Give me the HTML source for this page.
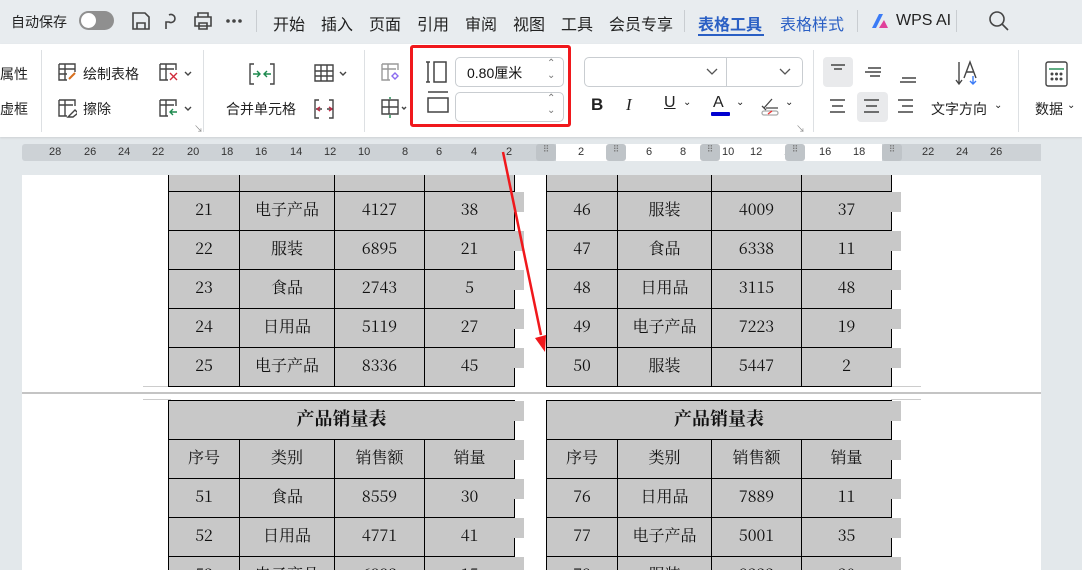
<!DOCTYPE html>
<html style="overflow:hidden;width:1082px;height:570px"><head><meta charset="utf-8"><style>
*{margin:0;padding:0;box-sizing:border-box}
body{width:1082px;height:570px;overflow:hidden;background:#e3e8eb;font-family:"Liberation Sans","Noto Sans CJK SC",sans-serif;position:relative;color:#222}
.a{position:absolute}
.top{left:0;top:0;width:1082px;height:44px;background:#e8ecef}
.tb{top:11px;font-size:16px;color:#222}
.rib{left:0;top:44px;width:1082px;height:93px;background:#fff;box-shadow:0 1px 2px rgba(0,0,0,.1)}
.t14{font-size:14px;color:#222}
.sep{width:1px;background:#dde0e3}
.ruler{left:22px;top:144px;width:1019px;height:17px;background:#cdd2d6;border-radius:3px;font-size:11px;color:#333}
.page{left:22px;top:175px;width:1019px;height:395px;background:#fff}
table{position:absolute;border-collapse:collapse;font-family:"Noto Serif CJK SC",serif;font-size:16px;color:#111}
td{border:1px solid #000;background:#c8c8c8;text-align:center;height:39px;padding:0 0 4px 0;line-height:20px;vertical-align:middle}
.mk{position:absolute;width:10px;height:20px;background:#c8c8c8}
.box{border:1px solid #c9cdd1;border-radius:5px;background:#fff}
</style></head><body>
<div class="a top"></div>
<div class="a tb" style="left:11px;top:12px;font-size:14px">自动保存</div>
<div class="a" style="left:79px;top:11px;width:35px;height:19px;border-radius:10px;background:#8f8f8f"><div style="position:absolute;left:2px;top:2px;width:15px;height:15px;border-radius:50%;background:#fff"></div></div>
<svg class="a" style="left:130px;top:10px" width="120" height="22" fill="none" stroke="#444" stroke-width="1.6">
<path d="M3 3h12l4 4v12H3z M7 19v-6h8v6"/>
<path d="M39 5a4 4 0 1 1 0 7h-3v7 M36 12a3 3 0 1 0 0 0"/>
<path d="M68 7V3h10v4 M65 7h16v9H65z M69 13h8v6h-8z"/>
<circle cx="98" cy="11" r="1" fill="#444"/><circle cx="104" cy="11" r="1" fill="#444"/><circle cx="110" cy="11" r="1" fill="#444"/>
</svg>
<div class="a sep" style="left:256px;top:10px;height:22px;background:#c9cdd1"></div>
<div class="a tb" style="left:273px">开始</div>
<div class="a tb" style="left:321px">插入</div>
<div class="a tb" style="left:369px">页面</div>
<div class="a tb" style="left:417px">引用</div>
<div class="a tb" style="left:465px">审阅</div>
<div class="a tb" style="left:513px">视图</div>
<div class="a tb" style="left:561px">工具</div>
<div class="a tb" style="left:609px">会员专享</div>
<div class="a sep" style="left:684px;top:10px;height:22px;background:#c9cdd1"></div>
<div class="a tb" style="left:698px;font-weight:bold;color:#2a5fc4">表格工具</div>
<div class="a" style="left:698px;top:34px;width:66px;height:2px;background:#2a5fc4"></div>
<div class="a tb" style="left:780px;color:#2a5fc4">表格样式</div>
<div class="a sep" style="left:857px;top:10px;height:22px;background:#c9cdd1"></div>
<svg class="a" style="left:870px;top:12px" width="22" height="18"><path d="M2 16L9 2h4L6 16z" fill="#3b7bf6"/><path d="M9 16l5-8 4 8z" fill="#e0409a"/></svg>
<div class="a tb" style="left:896px;top:12px">WPS AI</div>
<div class="a sep" style="left:956px;top:10px;height:22px;background:#c9cdd1"></div>
<svg class="a" style="left:988px;top:10px" width="22" height="22" fill="none" stroke="#444" stroke-width="1.6"><circle cx="9" cy="9" r="7"/><path d="M14 14l6 6"/></svg>

<div class="a rib"></div>
<div class="a t14" style="left:0;top:64px">属性</div>
<div class="a t14" style="left:0;top:99px">虚框</div>
<div class="a sep" style="left:41px;top:50px;height:82px"></div>
<svg class="a" style="left:57px;top:62px" width="20" height="62" fill="none" stroke="#444" stroke-width="1.4"><path d="M2 2h16v8M2 2v16h8M2 7h16M2 12h8M8 2v16"/><path d="M12 17l6-6" stroke="#d8701f" stroke-width="2"/><path d="M2 38h16v6M2 38v16h8M2 43h14M8 38v16M11 55l7-7 3 3-5 4z"/></svg>
<div class="a t14" style="left:83px;top:64px">绘制表格</div>
<div class="a t14" style="left:83px;top:99px">擦除</div>
<svg class="a" style="left:158px;top:62px" width="36" height="62" fill="none" stroke="#444" stroke-width="1.4"><path d="M2 2h16v6M2 2v16h8M2 7h14M8 2v16"/><path d="M12 11l7 7M19 11l-7 7" stroke="#d02a3a"/><path d="M27 10l3 3 3-3" /><path d="M2 38h16v6M2 38v16h8M2 43h14M8 38v16"/><path d="M19 50h-7M15 47l-3 3 3 3" stroke="#1d8a4e"/><path d="M27 45l3 3 3-3"/></svg>
<div class="a" style="left:194px;top:122px;font-size:9px;color:#888">↘</div>
<div class="a sep" style="left:203px;top:50px;height:82px"></div>
<svg class="a" style="left:248px;top:62px" width="28" height="24" fill="none" stroke="#444" stroke-width="1.4"><path d="M6 2H2v20h4M22 2h4v20h-4"/><path d="M5 12h7M9 9l3 3-3 3M23 12h-7M19 9l-3 3 3 3" stroke="#1d8a4e"/></svg>
<div class="a t14" style="left:226px;top:99px">合并单元格</div>
<svg class="a" style="left:313px;top:62px" width="36" height="62" fill="none" stroke="#444" stroke-width="1.4"><path d="M2 3h18v16H2zM2 9h18M2 14h18M8 3v16M14 3v16"/><path d="M27 10l3 3 3-3"/><path d="M6 38H2v18h4M16 38h4v18h-4M3 47h6M14 47h6" /><path d="M4 47l3-2M4 47l3 2M19 47l-3-2M19 47l-3 2" stroke="#c0304a"/></svg>
<div class="a sep" style="left:364px;top:50px;height:82px"></div>
<svg class="a" style="left:380px;top:62px" width="28" height="60" fill="none" stroke="#999" stroke-width="1.4"><path d="M2 2h16v6M2 2v16h8M2 7h14M8 2v16"/><path d="M15 11l3 3-3 3-3-3z" stroke="#8b6cf0"/><path d="M2 38h16v14H2zM2 45h16M9 38v14" stroke="#444"/><path d="M10 35v2M10 53v3" stroke="#1d8a4e"/><path d="M22 45l2 2 2-2" stroke="#444"/></svg>
<div class="a" style="left:410px;top:45px;width:161px;height:82px;border:3px solid #f0181c;border-radius:3px"></div>
<svg class="a" style="left:426px;top:60px" width="24" height="60" fill="none" stroke="#444" stroke-width="1.5"><path d="M2 2v20M0 2h4M0 22h4M8 2h12v20H8z"/><path d="M2 32h20M2 38h20v14H2z"/></svg>
<div class="a box" style="left:455px;top:57px;width:109px;height:30px"></div>
<div class="a t14" style="left:467px;top:63px;color:#111">0.80厘米</div>
<div class="a" style="left:547px;top:58px;font-size:10px;color:#777;line-height:12px">⌃<br>⌄</div>
<div class="a box" style="left:455px;top:92px;width:109px;height:30px"></div>
<div class="a" style="left:547px;top:93px;font-size:10px;color:#777;line-height:12px">⌃<br>⌄</div>
<div class="a box" style="left:584px;top:57px;width:219px;height:30px"></div>
<div class="a" style="left:726px;top:58px;width:1px;height:28px;background:#c9cdd1"></div>
<svg class="a" style="left:706px;top:67px" width="90" height="10" fill="none" stroke="#555" stroke-width="1.3"><path d="M1 2l5 5 5-5M74 2l5 5 5-5"/></svg>
<div class="a" style="left:591px;top:95px;font-size:17px;font-weight:bold">B</div>
<div class="a" style="left:626px;top:95px;font-size:17px;font-style:italic;font-family:'Liberation Serif',serif">I</div>
<div class="a" style="left:664px;top:94px;font-size:16px;text-decoration:underline">U</div>
<div class="a" style="left:683px;top:97px;font-size:10px">⌄</div>
<div class="a" style="left:713px;top:94px;font-size:16px">A</div>
<div class="a" style="left:711px;top:112px;width:19px;height:4px;background:#0000d0;border-radius:1px"></div>
<div class="a" style="left:736px;top:97px;font-size:10px">⌄</div>
<svg class="a" style="left:760px;top:96px" width="22" height="20" fill="none" stroke="#444" stroke-width="1.3"><path d="M4 12l8-9M2 10l4 4M6 12h12"/><rect x="2" y="15" width="16" height="4" rx="2" stroke="#aaa"/><path d="M8 18l4-3" stroke="#e33"/></svg>
<div class="a" style="left:785px;top:97px;font-size:10px">⌄</div>
<div class="a" style="left:796px;top:122px;font-size:9px;color:#888">↘</div>
<div class="a sep" style="left:813px;top:50px;height:82px"></div>
<div class="a" style="left:823px;top:57px;width:30px;height:30px;background:#e9eaec;border-radius:4px"></div>
<div class="a" style="left:857px;top:92px;width:31px;height:30px;background:#e9eaec;border-radius:4px"></div>
<svg class="a" style="left:828px;top:62px" width="90" height="56" stroke="#444" stroke-width="1.4"><path d="M3 3h14M6 7h8M40 6h13M37 10h16M42 14h10M74 16h14M72 20h16"/><path d="M2 38h15M4 44h11M2 50h15M36 38h15M38 44h11M36 50h15M70 38h15M74 44h11M70 50h15"/></svg>
<svg class="a" style="left:954px;top:60px" width="28" height="28" fill="none" stroke="#444" stroke-width="1.4"><path d="M5 2v22M2 20l3 4 3-4M10 18l6-16 6 16M12 12h8"/><path d="M19 16v8M16 21l3 3 3-3" stroke="#3b7bf6"/></svg>
<div class="a t14" style="left:931px;top:99px">文字方向</div>
<div class="a" style="left:994px;top:100px;font-size:10px">⌄</div>
<div class="a sep" style="left:1018px;top:50px;height:82px"></div>
<svg class="a" style="left:1045px;top:61px" width="24" height="26" fill="none" stroke="#444" stroke-width="1.4"><rect x="1" y="1" width="21" height="24" rx="2"/><path d="M4 8h15" stroke="#1d8a4e"/><circle cx="7" cy="13" r=".8"/><circle cx="11.5" cy="13" r=".8"/><circle cx="16" cy="13" r=".8"/><circle cx="7" cy="18" r=".8"/><circle cx="11.5" cy="18" r=".8"/><circle cx="16" cy="18" r=".8"/></svg>
<div class="a t14" style="left:1035px;top:99px">数据</div>
<div class="a" style="left:1067px;top:100px;font-size:10px">⌄</div>

<div class="a ruler"></div>
<div class="a" style="left:556px;top:144px;width:450px;height:17px;background:#fff"></div>
<div class="a" style="left:882px;top:144px;width:159px;height:17px;background:#cdd2d6"></div>
<div class="a" style="left:22px;top:146px;width:1019px;font-size:11px;color:#333;height:14px">
<span class="a" style="left:27px">28</span><span class="a" style="left:62px">26</span><span class="a" style="left:96px">24</span><span class="a" style="left:130px">22</span><span class="a" style="left:165px">20</span><span class="a" style="left:199px">18</span><span class="a" style="left:233px">16</span><span class="a" style="left:268px">14</span><span class="a" style="left:302px">12</span><span class="a" style="left:336px">10</span><span class="a" style="left:380px">8</span><span class="a" style="left:414px">6</span><span class="a" style="left:449px">4</span><span class="a" style="left:484px">2</span>
<span class="a" style="left:556px">2</span><span class="a" style="left:624px">6</span><span class="a" style="left:658px">8</span><span class="a" style="left:700px">10</span><span class="a" style="left:728px">12</span><span class="a" style="left:762px">14</span><span class="a" style="left:797px">16</span><span class="a" style="left:831px">18</span><span class="a" style="left:866px">20</span><span class="a" style="left:900px">22</span><span class="a" style="left:934px">24</span><span class="a" style="left:968px">26</span>
</div>
<div class="a" style="left:536px;top:144px;width:20px;height:17px;background:#bfc4c8;border-radius:3px;font-size:9px;text-align:center;color:#777">⠿</div>
<div class="a" style="left:606px;top:144px;width:20px;height:17px;background:#bfc4c8;border-radius:3px;font-size:9px;text-align:center;color:#777">⠿</div>
<div class="a" style="left:700px;top:144px;width:20px;height:17px;background:#bfc4c8;border-radius:3px;font-size:9px;text-align:center;color:#777">⠿</div>
<div class="a" style="left:785px;top:144px;width:20px;height:17px;background:#bfc4c8;border-radius:3px;font-size:9px;text-align:center;color:#777">⠿</div>
<div class="a" style="left:882px;top:144px;width:20px;height:17px;background:#bfc4c8;border-radius:3px;font-size:9px;text-align:center;color:#777">⠿</div>

<div class="a page"></div>
<div class="a" style="left:22px;top:392px;width:1019px;height:2px;background:#c4c4c4"></div>
<div class="a" style="left:143px;top:386px;width:28px;height:1px;background:#ccc"></div>
<div class="a" style="left:143px;top:399px;width:28px;height:1px;background:#ccc"></div>
<div class="a" style="left:891px;top:386px;width:30px;height:1px;background:#ccc"></div>
<div class="a" style="left:891px;top:399px;width:30px;height:1px;background:#ccc"></div>

<table style="left:168px;top:175px;width:347px">
<tr><td style="width:71px;height:16px;border-top:none"></td><td style="width:95px;border-top:none;height:16px"></td><td style="width:90px;border-top:none;height:16px"></td><td style="border-top:none;height:16px"></td></tr>
<tr><td>21</td><td>电子产品</td><td>4127</td><td>38</td></tr>
<tr><td>22</td><td>服装</td><td>6895</td><td>21</td></tr>
<tr><td>23</td><td>食品</td><td>2743</td><td>5</td></tr>
<tr><td>24</td><td>日用品</td><td>5119</td><td>27</td></tr>
<tr><td>25</td><td>电子产品</td><td>8336</td><td>45</td></tr>
</table>
<table style="left:546px;top:175px;width:346px">
<tr><td style="width:71px;height:16px;border-top:none"></td><td style="width:94px;border-top:none;height:16px"></td><td style="width:90px;border-top:none;height:16px"></td><td style="border-top:none;height:16px"></td></tr>
<tr><td>46</td><td>服装</td><td>4009</td><td>37</td></tr>
<tr><td>47</td><td>食品</td><td>6338</td><td>11</td></tr>
<tr><td>48</td><td>日用品</td><td>3115</td><td>48</td></tr>
<tr><td>49</td><td>电子产品</td><td>7223</td><td>19</td></tr>
<tr><td>50</td><td>服装</td><td>5447</td><td>2</td></tr>
</table>
<table style="left:168px;top:400px;width:347px">
<tr><td colspan="4" style="font-weight:bold;font-size:18px">产品销量表</td></tr>
<tr><td style="width:71px">序号</td><td style="width:95px">类别</td><td style="width:90px">销售额</td><td>销量</td></tr>
<tr><td>51</td><td>食品</td><td>8559</td><td>30</td></tr>
<tr><td>52</td><td>日用品</td><td>4771</td><td>41</td></tr>
<tr><td>53</td><td>电子产品</td><td>6993</td><td>15</td></tr>
</table>
<table style="left:546px;top:400px;width:346px">
<tr><td colspan="4" style="font-weight:bold;font-size:18px">产品销量表</td></tr>
<tr><td style="width:71px">序号</td><td style="width:94px">类别</td><td style="width:90px">销售额</td><td>销量</td></tr>
<tr><td>76</td><td>日用品</td><td>7889</td><td>11</td></tr>
<tr><td>77</td><td>电子产品</td><td>5001</td><td>35</td></tr>
<tr><td>78</td><td>服装</td><td>8222</td><td>20</td></tr>
</table>
<div class="mk" style="left:514px;top:192px"></div><div class="mk" style="left:514px;top:231px"></div><div class="mk" style="left:514px;top:270px"></div><div class="mk" style="left:514px;top:309px"></div><div class="mk" style="left:514px;top:348px"></div>
<div class="mk" style="left:891px;top:192px"></div><div class="mk" style="left:891px;top:231px"></div><div class="mk" style="left:891px;top:270px"></div><div class="mk" style="left:891px;top:309px"></div><div class="mk" style="left:891px;top:348px"></div>
<div class="mk" style="left:514px;top:401px"></div><div class="mk" style="left:514px;top:440px"></div><div class="mk" style="left:514px;top:479px"></div><div class="mk" style="left:514px;top:518px"></div><div class="mk" style="left:514px;top:557px;height:13px"></div>
<div class="mk" style="left:891px;top:401px"></div><div class="mk" style="left:891px;top:440px"></div><div class="mk" style="left:891px;top:479px"></div><div class="mk" style="left:891px;top:518px"></div><div class="mk" style="left:891px;top:557px;height:13px"></div>

<svg class="a" style="left:0;top:0" width="1082" height="570"><path d="M503 152L541 335" stroke="#f0181c" stroke-width="2.5"/><path d="M535 338l10 14 1-17z" fill="#f0181c"/></svg>
</body></html>
